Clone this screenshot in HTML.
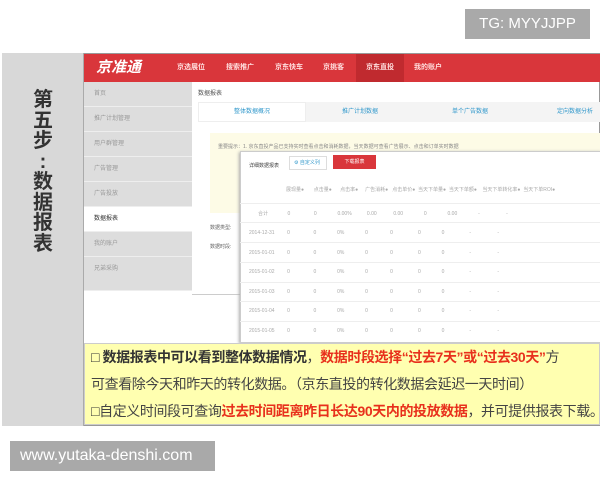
<!DOCTYPE html>
<html><head><meta charset="utf-8"><style>
*{margin:0;padding:0;box-sizing:border-box}
body{width:600px;height:480px;background:#fff;position:relative;overflow:hidden;font-family:"Liberation Sans","Noto Sans CJK SC",sans-serif}
.a{position:absolute}
.tg{left:465px;top:9px;width:125px;height:30px;background:#a9a9a9;color:#fff;font-size:15px;line-height:30px;text-align:center}
.frame{left:2px;top:53px;width:598px;height:373px;border:1px solid #999;background:#fff}
.left{left:2px;top:53px;width:82px;height:373px;background:#d8d8d8;border-right:1px solid #aaa}
.step{left:2px;top:90px;width:82px;text-align:center;font-size:20px;font-weight:bold;color:#333;line-height:20.5px}
.hdr{left:84px;top:54px;width:516px;height:28px;background:#d9363b}
.nav{top:54px;height:28px;line-height:28px;font-size:7px;color:#fdd;font-weight:bold}
.side{left:84px;width:108px;height:25px;background:#ddd;border-bottom:1px solid #eee;font-size:6px;color:#999;padding-left:10px;line-height:25px}
.tab{top:102px;height:20px;line-height:20px;font-size:6px;color:#39c;text-align:center}
.pop{left:240px;top:151px;width:362px;height:192px;background:#fff;border:1px solid #ccc;box-shadow:-1px 1px 3px #aaa}
.row{left:240px;width:360px;height:1px;background:#eee}
.c{font-size:5px;color:#aaa;white-space:pre}
.y{left:84px;top:343px;width:516px;height:82px;background:#ffffb0;border:1px solid #ccc;font-size:14px;letter-spacing:-0.4px;line-height:27px;padding-left:6px;color:#444;white-space:nowrap;overflow:hidden}
.r{color:#e8301c;font-weight:bold}
.wm{left:10px;top:441px;width:205px;height:30px;background:#a9a9a9;color:#fff;font-size:16px;line-height:30px;padding-left:10px}
</style></head><body>
<div class="a tg">TG: MYYJJPP</div>
<div class="a frame"></div>
<div class="a left"></div>
<div class="a step">第<br>五<br>步<br>:<br>数<br>据<br>报<br>表</div>
<div class="a hdr"></div>
<div class="a" style="left:96px;top:56px;font-size:15px;color:#fff;font-style:italic;font-weight:bold">京准通</div>
<div class="a" style="left:356px;top:54px;width:48px;height:28px;background:#c02a2f"></div>
<div class="a nav" style="left:177px">京选展位</div>
<div class="a nav" style="left:226px">搜索推广</div>
<div class="a nav" style="left:275px">京东快车</div>
<div class="a nav" style="left:323px">京挑客</div>
<div class="a nav" style="left:366px">京东直投</div>
<div class="a nav" style="left:414px">我的账户</div>
<div class="a side" style="top:82px">首页</div>
<div class="a side" style="top:107px">推广计划管理</div>
<div class="a side" style="top:132px">用户群管理</div>
<div class="a side" style="top:157px">广告管理</div>
<div class="a side" style="top:182px">广告投放</div>
<div class="a side" style="top:207px;background:#fff;color:#333">数据报表</div>
<div class="a side" style="top:232px">我的账户</div>
<div class="a side" style="top:257px;height:34px">兄弟采购</div>
<div class="a" style="left:198px;top:88px;font-size:6px;color:#555">数据报表</div>
<div class="a" style="left:198px;top:102px;width:108px;height:20px;background:#fff;border:1px solid #eee"></div>
<div class="a" style="left:306px;top:102px;width:294px;height:20px;background:#f4f4f4"></div>
<div class="a tab" style="left:198px;width:108px">整体数据概况</div>
<div class="a tab" style="left:320px;width:80px">推广计划数据</div>
<div class="a tab" style="left:430px;width:80px">单个广告数据</div>
<div class="a tab" style="left:545px;width:60px">定向数据分析</div>
<div class="a" style="left:210px;top:133px;width:390px;height:80px;background:#fdfbe6"></div>
<div class="a c" style="left:218px;top:143px;color:#888">重要提示：1. 京东直投产品已支持实时查看点击和消耗数据，当天数据可查看广告展示、点击和订单实时数据</div>
<div class="a c" style="left:210px;top:224px;color:#666">数据类型:</div>
<div class="a c" style="left:210px;top:243px;color:#666">数据时段:</div>
<div class="a" style="left:192px;top:294px;width:48px;height:1px;background:#ccc"></div>
<div class="a pop"></div>
<div class="a c" style="left:249px;top:162px;color:#444">详细数据报表</div>
<div class="a" style="left:289px;top:156px;width:38px;height:14px;border:1px solid #ddd;font-size:5px;color:#39c;line-height:12px;padding-left:4px">⚙ 自定义列</div>
<div class="a" style="left:333px;top:155px;width:43px;height:14px;background:#d9363b;font-size:5px;color:#fff;line-height:14px;text-align:center">下载报表</div>
<div class="a c" style="left:286px;top:186px">展现量●       点击量●      点击率●     广告消耗●   点击单价●  当天下单量●  当天下单额●    当天下单转化率●  当天下单ROI●</div>
<div class="a row" style="top:203px"></div>
<div class="a row" style="top:222px"></div>
<div class="a row" style="top:242px"></div>
<div class="a row" style="top:262px"></div>
<div class="a row" style="top:282px"></div>
<div class="a row" style="top:301px"></div>
<div class="a row" style="top:321px"></div>
<div class="a c" style="left:258px;top:210px">合计              0                 0               0.00%           0.00            0.00               0               0.00               -                   -</div>
<div class="a c" style="left:249px;top:230px">2014-12-31         0                 0               0%               0                0                  0               0                  -                   -</div>
<div class="a c" style="left:249px;top:250px">2015-01-01         0                 0               0%               0                0                  0               0                  -                   -</div>
<div class="a c" style="left:249px;top:269px">2015-01-02         0                 0               0%               0                0                  0               0                  -                   -</div>
<div class="a c" style="left:249px;top:289px">2015-01-03         0                 0               0%               0                0                  0               0                  -                   -</div>
<div class="a c" style="left:249px;top:308px">2015-01-04         0                 0               0%               0                0                  0               0                  -                   -</div>
<div class="a c" style="left:249px;top:328px">2015-01-05         0                 0               0%               0                0                  0               0                  -                   -</div>
<div class="a y"><b style="color:#333">□ 数据报表中可以看到整体数据情况</b>，<span class="r">数据时段选择“过去7天”或“过去30天”</span>方<br>可查看除今天和昨天的转化数据。（京东直投的转化数据会延迟一天时间）<br><b style="color:#333">□</b>自定义时间段可查询<span class="r">过去时间距离昨日长达90天内的投放数据</span>，并可提供报表下载。</div>
<div class="a wm">www.yutaka-denshi.com</div>
</body></html>
